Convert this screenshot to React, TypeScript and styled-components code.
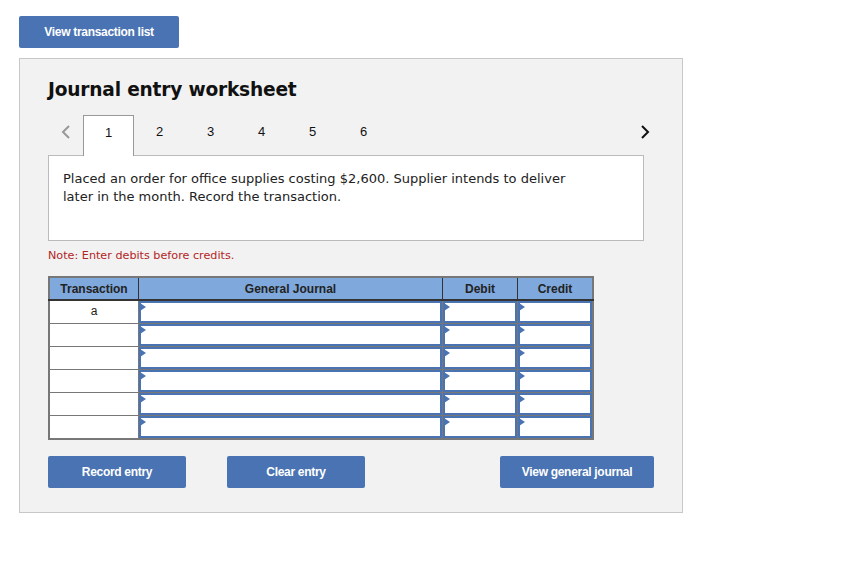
import styled, { createGlobalStyle } from "styled-components";

const GlobalStyle = createGlobalStyle`
  body {
    margin: 0;
    background: #fff;
    font-family: "DejaVu Sans", Verdana, sans-serif;
  }
`;

const Page = styled.div`
  padding: 16px 0 0 19px;
  width: 664px;
`;

const BlueButton = styled.button<{ $width: number }>`
  width: ${(p) => p.$width}px;
  height: 32px;
  background: #4a73b3;
  border: none;
  border-radius: 2px;
  color: #fff;
  font-family: "Liberation Sans", Arial, sans-serif;
  font-weight: bold;
  font-size: 12px;
  letter-spacing: -0.3px;
  cursor: pointer;
`;

const Panel = styled.div`
  margin-top: 10px;
  background: #f2f2f2;
  border: 1px solid #c8c8c8;
  padding: 20px 20px 24px 28px;
`;

const Title = styled.h2`
  margin: 0;
  font-size: 18.6px;
  font-weight: bold;
  color: #111;
  letter-spacing: -0.2px;
`;

const TabBar = styled.div`
  display: flex;
  align-items: flex-end;
  margin-top: 14px;
  height: 41px;
`;

const Chevron = styled.span`
  width: 35px;
  display: flex;
  justify-content: center;
  align-items: center;
  height: 100%;
  padding-bottom: 6px;
  box-sizing: border-box;
`;

const Tab = styled.div<{ $active?: boolean }>`
  width: 51px;
  height: 41px;
  box-sizing: border-box;
  display: flex;
  justify-content: center;
  align-items: center;
  padding-bottom: 8px;
  font-family: "Liberation Sans", Arial, sans-serif;
  font-size: 13px;
  color: #111;
  background: ${(p) => (p.$active ? "#fff" : "transparent")};
  border: 1px solid ${(p) => (p.$active ? "#999" : "transparent")};
  border-bottom: none;
  margin-bottom: ${(p) => (p.$active ? "-1px" : "0")};
  position: relative;
  z-index: 1;
`;

const Spacer = styled.div`
  flex: 1;
`;

const Question = styled.div`
  background: #fff;
  border: 1px solid #bbb;
  width: 596px;
  box-sizing: border-box;
  height: 86px;
  padding: 14px 60px 14px 14px;
  font-size: 13px;
  line-height: 18px;
  color: #222;
`;

const Note = styled.div`
  margin-top: 8px;
  font-size: 11.2px;
  color: #b32525;
`;

const Table = styled.table`
  margin-top: 14px;
  width: 539px;
  table-layout: fixed;
  border-collapse: collapse;
  border: 2px solid #777;
  font-family: "Liberation Sans", Arial, sans-serif;
  font-size: 12px;
`;

const Th = styled.th<{ $width: number }>`
  width: ${(p) => p.$width}px;
  height: 21px;
  padding: 0;
  background: #7fa8dc;
  color: #222;
  font-weight: bold;
  border-right: 1px solid #333;
  border-bottom: 2px solid #333;
  &:last-child {
    border-right: none;
  }
`;

const TxCell = styled.td`
  height: 22px;
  box-sizing: border-box;
  padding: 3px 0 0;
  border: 1px solid #777;
  background: #fff;
  text-align: center;
  vertical-align: top;
  font-size: 12px;
  color: #222;
`;

const InputCell = styled.td`
  padding: 0;
  border: 1px solid #777;
  height: 22px;
`;

const Field = styled.div`
  height: 22px;
  box-sizing: border-box;
  background: #fff;
  border: 2px solid #4a73b3;
  position: relative;
  &::before {
    content: "";
    position: absolute;
    left: -1px;
    top: 0;
    border-left: 6px solid #4a73b3;
    border-top: 4px solid transparent;
    border-bottom: 4px solid transparent;
  }
`;

const Actions = styled.div`
  display: flex;
  gap: 41px;
  margin-top: 16px;
  width: 606px;
`;

const rows = ["a", "", "", "", "", ""];

export default function App() {
  return (
    <>
      <GlobalStyle />
      <Page>
        <BlueButton $width={160}>View transaction list</BlueButton>
        <Panel>
          <Title>Journal entry worksheet</Title>
          <TabBar>
            <Chevron>
              <svg width="10" height="16" viewBox="0 0 10 16">
                <path d="M8 2 L2 8 L8 14" fill="none" stroke="#999" strokeWidth="2" />
              </svg>
            </Chevron>
            {[1, 2, 3, 4, 5, 6].map((n) => (
              <Tab key={n} $active={n === 1}>
                {n}
              </Tab>
            ))}
            <Spacer />
            <Chevron>
              <svg width="10" height="16" viewBox="0 0 10 16">
                <path d="M2 2 L8 8 L2 14" fill="none" stroke="#111" strokeWidth="2" />
              </svg>
            </Chevron>
          </TabBar>
          <Question>
            Placed an order for office supplies costing $2,600. Supplier intends to deliver
            later in the month. Record the transaction.
          </Question>
          <Note>Note: Enter debits before credits.</Note>
          <Table>
            <thead>
              <tr>
                <Th $width={88}>Transaction</Th>
                <Th $width={303}>General Journal</Th>
                <Th $width={74}>Debit</Th>
                <Th $width={74}>Credit</Th>
              </tr>
            </thead>
            <tbody>
              {rows.map((r, i) => (
                <tr key={i}>
                  <TxCell>{r}</TxCell>
                  <InputCell>
                    <Field />
                  </InputCell>
                  <InputCell>
                    <Field />
                  </InputCell>
                  <InputCell>
                    <Field />
                  </InputCell>
                </tr>
              ))}
            </tbody>
          </Table>
          <Actions>
            <BlueButton $width={138}>Record entry</BlueButton>
            <BlueButton $width={138}>Clear entry</BlueButton>
            <Spacer />
            <BlueButton $width={154}>View general journal</BlueButton>
          </Actions>
        </Panel>
      </Page>
    </>
  );
}
